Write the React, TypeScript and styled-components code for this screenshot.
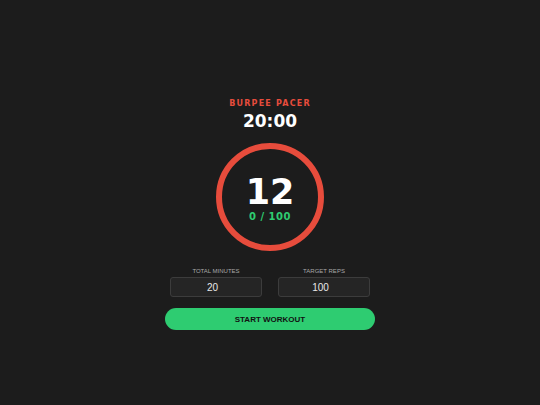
import React from 'react';
import styled, { createGlobalStyle } from 'styled-components';

const GlobalStyle = createGlobalStyle`
  html, body {
    margin: 0;
    padding: 0;
    background: #1c1c1c;
  }
  body {
    font-family: "DejaVu Sans", Verdana, sans-serif;
  }
`;

const Page = styled.div`
  width: 540px;
  height: 405px;
  display: flex;
  flex-direction: column;
  align-items: center;
  padding-top: 99px;
  box-sizing: border-box;
`;

const Title = styled.div`
  color: #e74c3c;
  font-size: 8px;
  font-weight: bold;
  letter-spacing: 1.2px;
  line-height: 10px;
`;

const Clock = styled.div`
  color: #ffffff;
  font-size: 17px;
  font-weight: bold;
  line-height: 22px;
  margin-top: 1px;
`;

const Ring = styled.div`
  width: 108px;
  height: 108px;
  box-sizing: border-box;
  border: 6px solid #e74c3c;
  border-radius: 50%;
  margin-top: 11px;
  display: flex;
  flex-direction: column;
  align-items: center;
  justify-content: center;
`;

const Count = styled.div`
  color: #ffffff;
  font-size: 35px;
  font-weight: bold;
  line-height: 38px;
  margin-top: 2px;
`;

const Progress = styled.div`
  color: #2ecc71;
  font-size: 10px;
  font-weight: bold;
  line-height: 12px;
  letter-spacing: 0.5px;
`;

const Controls = styled.div`
  width: 210px;
  margin-top: 17px;
  display: flex;
  flex-direction: column;
  align-items: center;
`;

const Fields = styled.div`
  width: 200px;
  display: grid;
  grid-template-columns: 1fr 1fr;
  gap: 16px;
`;

const Field = styled.label`
  display: flex;
  flex-direction: column;
  align-items: center;
  gap: 2px;
`;

const Label = styled.span`
  font-family: "Liberation Sans", Arial, sans-serif;
  font-size: 6px;
  color: #a8a8a8;
  text-transform: uppercase;
  line-height: 7px;
`;

const Input = styled.input`
  width: 100%;
  height: 20px;
  box-sizing: border-box;
  background: #252525;
  border: 1px solid #3c3c3c;
  border-radius: 3px;
  color: #e8e8e8;
  font-family: "Liberation Sans", Arial, sans-serif;
  font-size: 10px;
  text-align: center;
  outline: none;
  padding: 0 7px 0 0;
`;

const StartButton = styled.button`
  width: 210px;
  height: 22px;
  margin-top: 11px;
  background: #2ecc71;
  border: none;
  border-radius: 11px;
  color: #111;
  font-family: "Liberation Sans", Arial, sans-serif;
  font-size: 8px;
  font-weight: bold;
  cursor: pointer;
`;

export default function App() {
  const [minutes, setMinutes] = React.useState('20');
  const [reps, setReps] = React.useState('100');

  return (
    <>
      <GlobalStyle />
      <Page>
        <Title>BURPEE PACER</Title>
        <Clock>{String(Number(minutes) || 0).padStart(2, '0')}:00</Clock>
        <Ring>
          <Count>12</Count>
          <Progress>0 / {reps}</Progress>
        </Ring>
        <Controls>
          <Fields>
            <Field>
              <Label>Total Minutes</Label>
              <Input inputMode="numeric" value={minutes} onChange={(e) => setMinutes(e.target.value)} />
            </Field>
            <Field>
              <Label>Target Reps</Label>
              <Input inputMode="numeric" value={reps} onChange={(e) => setReps(e.target.value)} />
            </Field>
          </Fields>
          <StartButton>START WORKOUT</StartButton>
        </Controls>
      </Page>
    </>
  );
}
